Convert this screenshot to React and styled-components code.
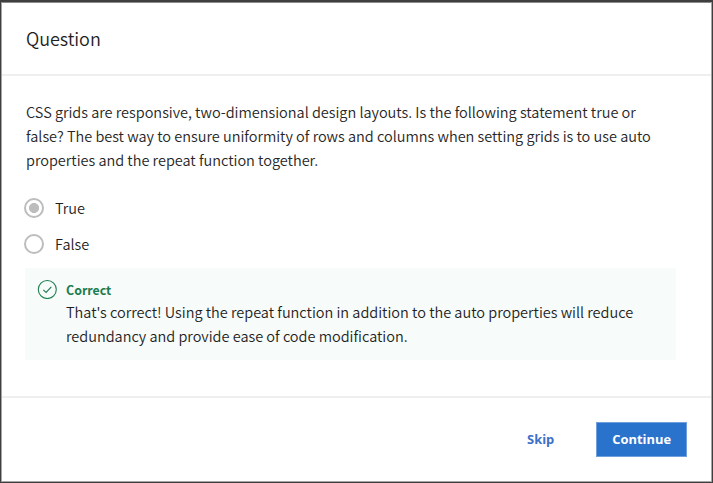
import React from 'react';
import styled, { createGlobalStyle } from 'styled-components';

const GlobalStyle = createGlobalStyle`
  * { box-sizing: border-box; }
  body { margin: 0; font-family: "Noto Sans CJK SC", "Noto Sans", sans-serif; color: #1f1f1f; background: #fff; }
`;

const Frame = styled.div`
  width: 713px;
  height: 483px;
  border: 1px solid #403f40;
  border-top-width: 2px;
`;

const Dialog = styled.main`
  display: flex;
  flex-direction: column;
  height: 100%;
  border: 1px solid #a5a5a5;
  border-top-color: #8b8b8b;
  background: #fff;
`;

const Header = styled.header`
  height: 73px;
  padding: 21px 24px 0;
  border-bottom: 2px solid #efefef;
`;

const Title = styled.h1`
  margin: 0;
  font-size: 18px;
  font-weight: 350;
  line-height: 28px;
  letter-spacing: -0.05px;
`;

const Content = styled.section`
  flex: 1;
  padding: 24px 35px 0 23px;
`;

const Line = styled.span`
  display: block;
  width: max-content;
  font-size: 14.5px;
  font-weight: 350;
  line-height: 24px;
  white-space: nowrap;
  letter-spacing: -0.012px;
`;

const Prompt = styled.p`
  margin: 0 0 17px 1px;
  color: #262626;
`;

const Option = styled.label`
  display: flex;
  align-items: center;
  gap: 11px;
  height: 36px;
  margin-left: -1px;
  font-size: 14.5px;
  font-weight: 350;
`;

const Radio = styled.input`
  appearance: none;
  width: 20px;
  height: 20px;
  margin: 1px 0 0;
  border: 2px solid #bdbdbd;
  border-radius: 50%;
  background: ${({ checked }) => checked ? 'radial-gradient(circle, #bdbdbd 0 4.7px, #fff 5.3px)' : '#fff'};
`;

const Feedback = styled.aside`
  display: flex;
  gap: 9px;
  width: 651px;
  height: 92px;
  margin-top: 7px;
  padding: 11px 12px;
  background: #f7fbfa;
`;

const FeedbackTitle = styled.strong`
  display: block;
  color: #1d7c50;
  font-size: 12.4px;
  font-weight: 700;
  line-height: 22px;
  margin-bottom: -1px;
`;

const Footer = styled.footer`
  display: flex;
  justify-content: flex-end;
  gap: 26px;
  height: 85px;
  padding: 24px 24px;
  border-top: 2px solid #efefef;
`;

const Button = styled.button`
  height: 35px;
  padding: 0 15px 1px;
  border: 1px solid ${({ $primary }) => $primary ? '#6fa0dd' : 'transparent'};
  background: ${({ $primary }) => $primary ? '#2a73cc' : 'transparent'};
  color: ${({ $primary }) => $primary ? '#fff' : '#3d70c9'};
  font: 700 12.9px "Open Sans", sans-serif;
`;

export default function App() {
  return (
    <>
      <GlobalStyle />
      <Frame>
        <Dialog>
          <Header><Title>Question</Title></Header>
          <Content>
            <Prompt>
              <Line>CSS grids are responsive, two-dimensional design layouts. Is the following statement true or</Line>
              <Line>false? The best way to ensure uniformity of rows and columns when setting grids is to use auto</Line>
              <Line>properties and the repeat function together.</Line>
            </Prompt>
            <Option><Radio type="radio" name="answer" checked readOnly />True</Option>
            <Option><Radio type="radio" name="answer" checked={false} readOnly />False</Option>
            <Feedback>
              <svg width="20" height="20" viewBox="0 0 20 20" fill="none" stroke="#1d7c50" strokeWidth="1.1"><circle cx="10.3" cy="10.5" r="9" /><path d="m6.3 10.8 2.8 2.6 5.2-5.6" /></svg>
              <div>
                <FeedbackTitle>Correct</FeedbackTitle>
                <Line>That's correct! Using the repeat function in addition to the auto properties will reduce</Line>
                <Line>redundancy and provide ease of code modification.</Line>
              </div>
            </Feedback>
          </Content>
          <Footer><Button>Skip</Button><Button $primary>Continue</Button></Footer>
        </Dialog>
      </Frame>
    </>
  );
}
